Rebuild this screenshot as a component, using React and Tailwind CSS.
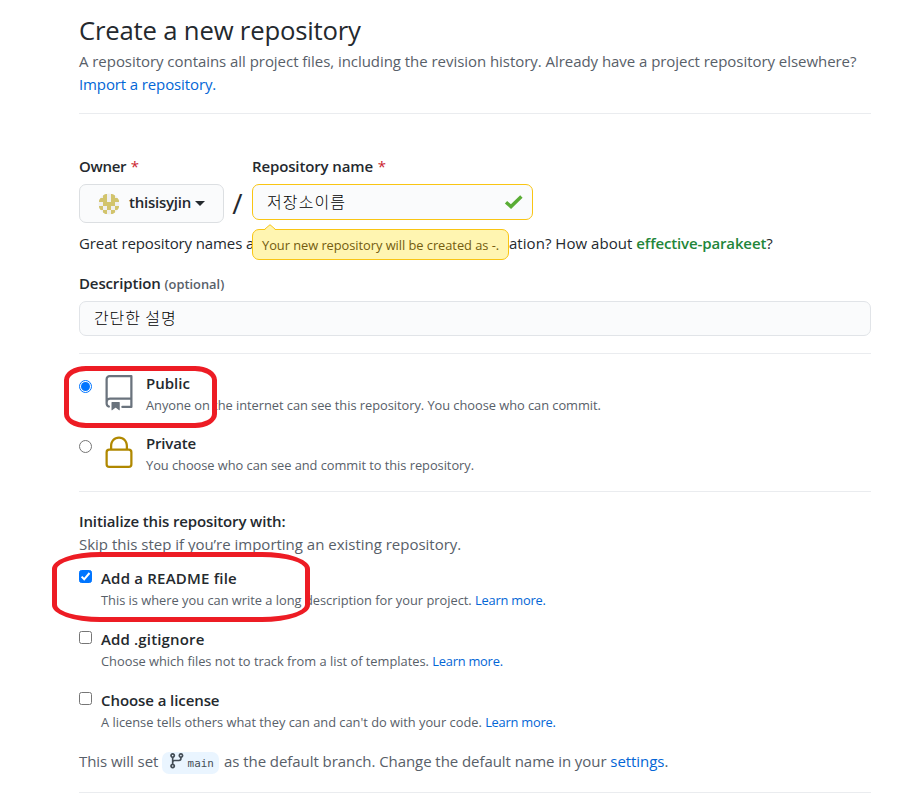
import React from "react";

function Divider({ className = "" }) {
  return <div className={`h-px bg-[#eaecef] ${className}`} />;
}

function Check({ checked }) {
  return (
    <span className={`mt-[3px] flex h-[13px] w-[13px] shrink-0 items-center justify-center rounded-[2.5px] border ${checked ? "border-[#0075ff] bg-[#0075ff]" : "border-[#767676] bg-white"}`}>
      {checked && (
        <svg viewBox="0 0 13 13" className="h-[13px] w-[13px] shrink-0" fill="none" stroke="white" strokeWidth="2">
          <path d="M2.6 6.6 5.2 9.3 10.5 3" />
        </svg>
      )}
    </span>
  );
}

function Radio({ checked }) {
  return (
    <span className={`mt-[7px] flex h-[13px] w-[13px] shrink-0 items-center justify-center rounded-full border bg-white ${checked ? "border-[#0075ff]" : "border-[#767676]"}`}>
      {checked && <span className="h-[9px] w-[9px] rounded-full bg-[#0075ff]" />}
    </span>
  );
}

function Visibility({ checked, title, titleClass, text, icon, iconClass, className }) {
  return (
    <div className={`flex ${className}`}>
      <Radio checked={checked} />
      <svg viewBox="0 0 24 24" className={`ml-[9px] mt-[2px] h-[36px] w-[36px] shrink-0 ${iconClass}`}>
        <path fillRule="evenodd" d={icon} />
      </svg>
      <div className="-mt-px ml-[9px] whitespace-nowrap">
        <div className={`h-[22px] font-semibold leading-[22px] ${titleClass}`}>{title}</div>
        <div className="text-[12.85px] leading-[22px] tracking-[-0.04px] text-[#586069]">{text}</div>
      </div>
    </div>
  );
}

function Option({ checked, title, titleClass, text, className = "" }) {
  return (
    <div className={`flex h-[61px] ${className}`}>
      <Check checked={checked} />
      <div className="ml-[9px] min-w-0">
        <div className={`h-[22px] whitespace-nowrap font-semibold leading-[22px] ${titleClass}`}>{title}</div>
        <div className="h-[22px] whitespace-nowrap text-[12.85px] leading-[22px] tracking-[-0.01px] text-[#586069]">
          {text} <span className="tracking-[-0.22px] text-[#0366d6]">Learn more.</span>
        </div>
      </div>
    </div>
  );
}

const REPO =
  "M3 2.75A2.75 2.75 0 015.75 0h14.5a.75.75 0 01.75.75v20.5a.75.75 0 01-.75.75h-6a.75.75 0 010-1.5h5.25v-4H6A1.5 1.5 0 004.5 18v.75c0 .716.43 1.334 1.05 1.605a.75.75 0 01-.6 1.374A3.25 3.25 0 013 18.75v-16zM19.5 1.5V15H6c-.546 0-1.059.146-1.5.401V2.75c0-.69.56-1.25 1.25-1.25H19.5zM7 18.25a.25.25 0 01.25-.25h5a.25.25 0 01.25.25v5.01a.25.25 0 01-.397.201l-2.206-1.604a.25.25 0 00-.294 0L7.397 23.46a.25.25 0 01-.397-.2v-5.01z";
const LOCK =
  "M6 9V7.25C6 3.845 8.503 1 12 1s6 2.845 6 6.25V9h.5a2.5 2.5 0 012.5 2.5v8a2.5 2.5 0 01-2.5 2.5h-13A2.5 2.5 0 013 19.5v-8A2.5 2.5 0 015.5 9H6zm1.5-1.75C7.5 4.58 9.422 2.5 12 2.5c2.578 0 4.5 2.08 4.5 4.75V9h-9V7.25zm-3 4.25a1 1 0 011-1h13a1 1 0 011 1v8a1 1 0 01-1 1h-13a1 1 0 01-1-1v-8z";
const BRANCH =
  "M11.75 2.5a.75.75 0 100 1.5.75.75 0 000-1.5zm-2.25.75a2.25 2.25 0 113 2.122V6A2.5 2.5 0 0110 8.5H6a1 1 0 00-1 1v1.128a2.251 2.251 0 11-1.5 0V5.372a2.25 2.25 0 111.5 0v1.836A2.492 2.492 0 016 7h4a1 1 0 001-1v-.628A2.25 2.25 0 019.5 3.25zM4.25 12a.75.75 0 100 1.5.75.75 0 000-1.5zM3.5 3.25a.75.75 0 111.5 0 .75.75 0 01-1.5 0z";

const AVATAR = ["01010", "11011", "01110", "10101", "01010"];

export default function App() {
  return (
    <div className="relative h-[799px] w-[911px] overflow-hidden bg-white pl-[79px] pr-[40px] font-['Open_Sans','Noto_Sans_CJK_KR',sans-serif] text-[15px] text-[#24292e]">
      <h1 className="h-[50px] whitespace-nowrap pt-[11px] text-[25.7px] leading-[39px] tracking-[-0.19px]">Create a new repository</h1>
      <p className="whitespace-nowrap leading-[23px] tracking-[-0.047px] text-[#586069]">
        A repository contains all project files, including the revision history. Already have a project repository elsewhere?
      </p>
      <p className="leading-[23px] tracking-[-0.12px] text-[#0366d6]">Import a repository.</p>
      <Divider className="mt-[17px]" />

      <div className="mt-[41px] flex h-[67px]">
        <div className="w-[145px]">
          <div className="h-[29px] font-semibold leading-[23px] tracking-[-0.3px]">
            Owner <span className="ml-px font-normal text-[#cb2431]">*</span>
          </div>
          <div className="flex h-[39px] items-center rounded-[7px] border border-[#dcdfe2] bg-[#fafbfc] pl-[18px] font-semibold tracking-[-0.23px]">
            <svg viewBox="0 0 22 22" className="h-[22px] w-[22px]">
              <defs>
                <clipPath id="avatar"><circle cx="11" cy="11" r="10.5" /></clipPath>
              </defs>
              <g clipPath="url(#avatar)">
                <rect width="22" height="22" fill="#f0f0f0" />
                {AVATAR.map((row, y) => [...row].map((c, x) => c === "1" && (
                  <rect key={`${x}${y}`} x={1 + x * 4} y={1 + y * 4} width="4" height="4" fill="#d2c46c" />
                )))}
              </g>
            </svg>
            <span className="ml-[9px] w-[66px] pb-[2px]">thisisyjin</span>
            <span className="border-x-[5px] border-t-[5px] border-x-transparent border-t-[#24292e]" />
          </div>
        </div>
        <div className="w-[28px] pr-px pt-[32px] text-center text-[28px] leading-[32px]">/</div>
        <div className="relative w-[281px]">
          <div className="h-[29px] font-semibold leading-[23px] tracking-[-0.13px]">
            Repository name <span className="ml-px font-normal text-[#cb2431]">*</span>
          </div>
          <div className="flex h-[36px] items-center justify-between rounded-[7px] border border-[#f9c513] bg-[#fafbfc] pl-[14px] pr-[8px]">
            <span className="pb-[2px] text-[16px] font-light leading-[22px] tracking-[1.1px] text-black font-['Noto_Sans_CJK_KR',sans-serif]">저장소이름</span>
            <svg viewBox="0 0 20 16" className="h-[16px] w-[20px]" fill="none" stroke="#5aad35" strokeWidth="3.4">
              <path d="M2 8.2 7 12.6 17.4 2.6" />
            </svg>
          </div>
          <div className="absolute left-0 top-[74px] z-10 flex h-[31px] w-[257px] items-center whitespace-nowrap rounded-[7px] border border-[#f9c513] bg-[#fff5b1] pl-[9px] pt-[2px] text-[12.85px] tracking-[-0.04px] text-[#735c0f]">
            <svg viewBox="0 0 12 7" className="absolute left-[11px] top-[-6px] h-[7px] w-[12px]">
              <path d="M0 6.5 6 .7 12 6.5V7H0Z" fill="#fff5b1" />
              <path d="M0 5.9 6 .7 12 5.9" fill="none" stroke="#f9c513" />
            </svg>
            Your new repository will be created as -.
          </div>
        </div>
      </div>

      <div className="mt-[10px] flex whitespace-nowrap leading-[23px]">
        <span className="w-[430px] tracking-[-0.11px]">Great repository names a</span>
        <span className="tracking-[0.04px]">
          ation? How about <span className="font-semibold tracking-[-0.13px] text-[#22863a]">effective-parakeet</span>?
        </span>
      </div>
      <div className="mt-[17px] font-semibold leading-[23px] tracking-[-0.13px]">
        Description <span className="text-[12.85px] tracking-normal text-[#586069]">(optional)</span>
      </div>
      <div className="mt-[5px] flex h-[35px] items-center rounded-[7px] border border-[#e1e4e8] bg-[#fafbfc] pb-[3px] pl-[14px]">
        <span className="text-[16px] font-light leading-[22px] tracking-[0.9px] text-black font-['Noto_Sans_CJK_KR',sans-serif]">간단한 설명</span>
      </div>
      <Divider className="mt-[17px]" />

      <Visibility checked className="mt-[19px] h-[60px]" icon={REPO} iconClass="fill-[#6a737d]" title="Public" titleClass="" text="Anyone on the internet can see this repository. You choose who can commit." />
      <Visibility className="h-[58px]" icon={LOCK} iconClass="fill-[#b08800]" title="Private" titleClass="tracking-[-0.18px]" text="You choose who can see and commit to this repository." />
      <Divider />

      <div className="mt-[18px] font-semibold leading-[23px] tracking-[-0.13px]">Initialize this repository with:</div>
      <div className="leading-[23px] tracking-[-0.01px] text-[#586069]">Skip this step if you’re importing an existing repository.</div>
      <Option checked className="mt-[11px]" title="Add a README file" titleClass="tracking-[0.2px]" text="This is where you can write a long description for your project." />
      <Option title="Add .gitignore" titleClass="tracking-[0.15px]" text="Choose which files not to track from a list of templates." />
      <Option title="Choose a license" titleClass="tracking-[-0.08px]" text="A license tells others what they can and can't do with your code." />

      <div className="flex h-[23px] whitespace-nowrap leading-[23px] tracking-[-0.06px] text-[#586069]">
        <span className="w-[83px]">This will set</span>
        <span className="mt-[2px] flex h-[22px] w-[57px] items-center rounded-[7px] bg-[#eaf5ff] pl-[6px]">
          <svg viewBox="0 0 16 16" className="mb-[4px] h-[17.6px] w-[17.6px] shrink-0 fill-[#444d56]">
            <path fillRule="evenodd" d={BRANCH} />
          </svg>
          <span className="ml-[2px] text-[10.9px] tracking-normal text-[#444d56] font-['DejaVu_Sans_Mono',monospace]">main</span>
        </span>
        <span className="ml-[5px] tracking-[-0.06px]">
          as the default branch. Change the default name in your <span className="text-[#0366d6]">settings</span>.
        </span>
      </div>
      <Divider className="mt-[19px]" />

      <div className="pointer-events-none absolute left-[64px] top-[366px] h-[62px] w-[153px] rounded-[22px/14px] border-[5px] border-[#ed1c24]" />
      <div className="pointer-events-none absolute left-[52px] top-[552px] h-[70px] w-[258px] rounded-[48px/17px] border-[5px] border-[#ed1c24]" />
    </div>
  );
}
